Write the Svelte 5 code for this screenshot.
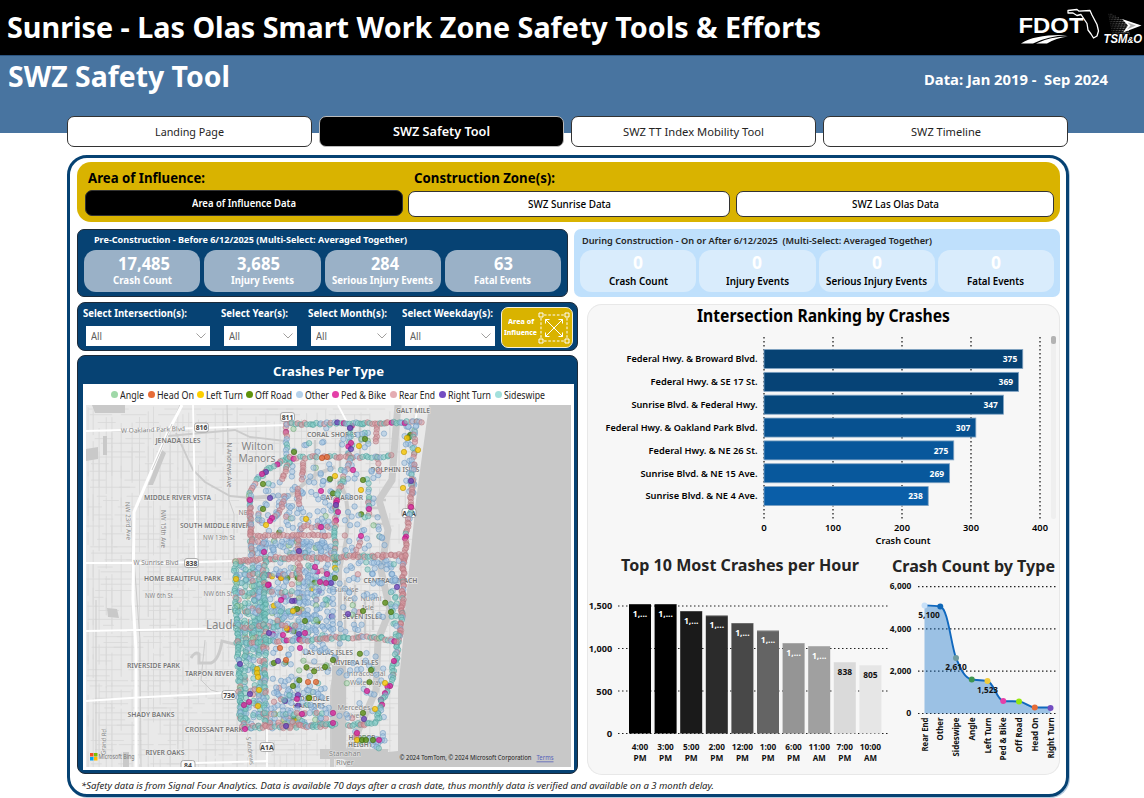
<script>
  // Gives a text run a fixed advance width, condensing or widening its glyphs.
  function fit(node, width) {
    const natural = node.getBoundingClientRect().width;
    if (!natural) return;
    node.style.width = width + 'px';
    node.style.transform = `scaleX(${width / natural})`;
  }

  const tabs = [
    { name: 'Landing Page', w: 69 },
    { name: 'SWZ Safety Tool', w: 97, active: true },
    { name: 'SWZ TT Index Mobility Tool', w: 141 },
    { name: 'SWZ Timeline', w: 70 }
  ];
  const before = [
    { v: '17,485', vw: 52, dx: 1.5, name: 'Crash Count', w: 59 },
    { v: '3,685', vw: 43, dx: -3.5, name: 'Injury Events', w: 63 },
    { v: '284', vw: 28, dx: 2, name: 'Serious Injury Events', w: 101 },
    { v: '63', vw: 19, dx: 1, name: 'Fatal Events', w: 57 }
  ];
  const during = before.map((m) => ({ ...m, v: '0', vw: 10, dx: 0 }));
  const filters = [
    { name: 'Select Intersection(s):', w: 104, cell: 138, box: 124 },
    { name: 'Select Year(s):', w: 67, cell: 87, box: 73 },
    { name: 'Select Month(s):', w: 79, cell: 94, box: 80 },
    { name: 'Select Weekday(s):', w: 91, cell: 99, box: 90 }
  ];
  const legend = [
    ['Angle', '#9fd8a8', 24, 37], ['Head On', '#e66c37', 37, 49], ['Left Turn', '#fdcf00', 37, 49],
    ['Off Road', '#5f930b', 37, 50], ['Other', '#b5d1ea', 24, 36], ['Ped & Bike', '#e43fa8', 45, 58],
    ['Rear End', '#e4adb3', 36, 49], ['Right Turn', '#744ec2', 43, 56], ['Sideswipe', '#a3e0dc', 41, 46]
  ];

  const ranking = [
    ['Federal Hwy. & Broward Blvd.', 375, '#064273', 131], ['Federal Hwy. & SE 17 St.', 369, '#064376', 107],
    ['Sunrise Blvd. & Federal Hwy.', 347, '#06487d', 126], ['Federal Hwy. & Oakland Park Blvd.', 307, '#075190', 152],
    ['Federal Hwy. & NE 26 St.', 275, '#08579b', 109], ['Sunrise Blvd. & NE 15 Ave.', 269, '#08589c', 117],
    ['Sunrise Blvd. & NE 4 Ave.', 238, '#0a5ea8', 112]
  ];
  const hours = [
    ['4:00', 'PM', 604, '#000', '1,...'], ['3:00', 'PM', 604, '#000', '1,...'], ['5:00', 'PM', 611, '#1a1a1a', '1,...'],
    ['2:00', 'PM', 615.5, '#2b2b2b', '1,...'], ['12:00', 'PM', 623, '#484848', '1,...'], ['1:00', 'PM', 630.5, '#646464', '1,...'],
    ['6:00', 'PM', 643, '#959595', '1,...'], ['11:00', 'AM', 646, '#a0a0a0', '1,...'], ['7:00', 'PM', 662, '#dadada', '838'],
    ['10:00', 'AM', 665, '#e6e6e6', '805']
  ];
  const types = [
    ['Rear End', 605.4, '#c7e0f8', 34], ['Other', 606.5, '#1068b8', 23], ['Sideswipe', 658, '#6f9ba0', 39],
    ['Angle', 679.5, '#3f9550', 23], ['Left Turn', 681, '#f0cb3c', 36], ['Ped & Bike', 701, '#e43fa8', 43],
    ['Off Road', 701.5, '#96e80c', 35], ['Head On', 707.5, '#e66c37', 34], ['Right Turn', 708, '#744ec2', 41]
  ];
  const tx = (i) => 924.5 + 15.75 * i;
  const curve = 'M924.5 605.4C930 605.6 936 605.8 940.2 606.5C948 608 951 645 956 658C960 667 964 678 971.7 679.5C977 680 982 680.2 987.5 681C994 683 997 700 1003.2 701C1008 701.3 1014 701.3 1019 701.5C1025 702 1029 707 1034.7 707.5H1050.5';

  // ---- crash map ----
  let seed = 71;
  const rnd = () => {
    seed = (seed * 1664525 + 1013904223) % 4294967296;
    return seed / 4294967296;
  };
  const kinds = {
    b: ['#a3c5e4', '#6a95bd'], p: ['#d6959c', '#b0747b'], t: ['#80cbc5', '#4f9c98'], g: ['#a0d6a8', '#6a9d70'],
    m: ['#d8259b', '#a01772'], v: ['#6a42b8', '#472a88'], d: ['#5b8f16', '#38610a'], y: ['#f7c500', '#b08c00'], o: ['#e66c37', '#ad4515']
  };
  const dots = [];
  const pick = (mix) => mix[Math.floor(rnd() * mix.length)];
  function road(points, step, mix, jitter = 1.1) {
    for (let i = 1; i < points.length; i++) {
      const [ax, ay] = points[i - 1];
      const [bx, by] = points[i];
      const n = Math.max(1, Math.round(Math.hypot(bx - ax, by - ay) / step));
      for (let k = 0; k < n; k++) {
        const t = (k + rnd() * 0.6) / n;
        dots.push([ax + (bx - ax) * t + (rnd() - 0.5) * 2 * jitter, ay + (by - ay) * t + (rnd() - 0.5) * 2 * jitter, pick(mix)]);
      }
    }
  }
  function area(x0, y0, x1, y1, n, mix) {
    for (let i = 0; i < n; i++) dots.push([x0 + rnd() * (x1 - x0), y0 + rnd() * (y1 - y0), pick(mix)]);
  }
  const calm = 'bbbbbbbbbbbbbbbbbgbtbbbbpbbgbbdbbbbb';
  const busy = 'bbbbbbbbtbbtbpbbbgtpbbbdbbbbbtyvmbbbb';
  const red = 'pppppppptppppppppptpppbppp';
  const mixed = 'ppptttpbtptbppttgppbtpttbpptppbtpmt';
  const teal = 'tttttbttpttbtgtttbtptttttbttpttgtttt';

  area(290, 428, 345, 452, 11, calm);
  area(355, 428, 385, 452, 8, calm);
  area(287, 462, 335, 490, 20, calm);
  area(256, 482, 290, 534, 36, calm);
  area(290, 490, 334, 534, 42, calm);
  area(340, 464, 385, 552, 44, calm);
  area(255, 539, 332, 555, 95, 'bbbbbbbbbbbbbbpbbgbtbbbbb');
  area(268, 562, 332, 640, 140, busy);
  area(300, 562, 332, 640, 36, calm);
  area(336, 560, 400, 634, 46, calm);
  area(372, 562, 400, 585, 22, calm);
  area(238, 562, 264, 640, 100, 'bbtbtbtbpbtgtbtbttbb');
  area(268, 570, 300, 636, 44, busy);
  area(239, 644, 263, 724, 74, 'bbtbtpbtgpbbbttbtpbb');
  area(268, 644, 300, 712, 38, calm);
  area(270, 690, 326, 724, 44, busy);
  area(300, 646, 332, 712, 24, calm);
  area(335, 642, 385, 720, 32, calm);
  area(268, 715, 332, 726, 34, 'btptbpbgb');
  area(404, 424, 415, 500, 28, calm);
  for (const x of [299, 308, 316, 333]) road([[x, 576], [x, 640]], 5.4, 'bbbbbbbg', 0.6);
  for (const x of [245, 253, 259]) road([[x, 562], [x + 1, 720]], 5.4, teal);
  for (const y of [575, 593, 612, 627]) road([[238, y], [300, y - 1]], 4.6, 'tpbpbtppbt');
  road([[318, 640], [339, 662]], 5, 'bbb');
  road([[351, 424], [350, 458]], 2.8, 'ttttbtpmvt', 2);
  road([[364, 426], [362, 440]], 4, 'ttgb', 2);
  road([[377, 426], [376, 444]], 3, 'ppp', 0.8);
  road([[377, 455], [378, 465]], 3, 'ppp', 0.8);
  road([[304, 462], [301, 480]], 2.6, 'ppp', 1);
  road([[289, 462], [281, 481]], 2.6, 'pptp', 1);
  road([[298, 488], [299, 506]], 2.6, 'ppp', 0.8);
  road([[285, 495], [281, 510], [271, 520]], 3, 'pppb', 0.8);
  road([[368, 480], [369, 520]], 4, 'tpptb', 1);
  road([[361, 536], [356, 552]], 4, 'pptb', 1.5);
  road([[300, 527], [335, 526]], 4, 'ppbp', 2);
  road([[298, 538], [299, 556]], 3, 'ppp');
  road([[299, 562], [300, 582]], 3, 'ppp');
  road([[334, 556], [336, 580]], 3.5, 'tdtyb');
  road([[253, 536], [335, 535]], 3, red);
  road([[286, 458], [270, 468], [256, 480], [250, 495], [250, 515], [252, 558]], 2.8, mixed);
  road([[250, 495], [250, 515], [252, 558]], 3.2, 'pppbpp');
  road([[287, 424], [286, 458]], 2.8, mixed);
  road([[286, 458], [320, 457], [377, 457], [394, 456]], 3, mixed);
  road([[287, 424], [340, 423.5], [424, 422]], 2.4, 'tpttpbtbpttpbtbpttpptvm');
  road([[350, 458], [342, 480], [336, 500], [335, 530], [334, 556]], 2.6, mixed);
  road([[415, 424], [413, 460], [412, 485]], 3, mixed, 1.6);
  road([[412, 480], [410, 515], [406, 535], [405, 556]], 2.3, 'ppppptmppbpppb');
  road([[404, 556], [403, 585], [402, 615], [399, 640]], 1.6, 'pppppppbppt');
  road([[393, 590], [396, 640]], 3.2, 'ttbtb', 3);
  road([[398, 640], [395, 662], [391, 684], [382, 700], [377, 722]], 1.9, 'ttpttbptbtttbm', 1.7);
  road([[268, 642], [310, 640], [330, 638], [352, 637], [380, 638], [398, 641]], 2.4, mixed, 1.4);
  road([[237, 643], [268, 642]], 2.4, teal);
  road([[235, 562], [265, 559]], 2.6, red);
  road([[265, 558], [335, 558], [345, 556], [406, 555.5]], 2.2, 'pppptppptpptpppt', 1.4);
  road([[235, 562], [236, 600], [238, 650], [240, 700], [243, 727]], 2.2, teal, 1.4);
  road([[265, 558], [264, 600], [265, 650], [265, 725]], 2, 'ttpttttpttb', 1.8);
  road([[265, 714], [333, 713]], 4, 'pppbbt', 1);
  road([[243, 727], [280, 727], [337, 725]], 2, 'tpptptppptbppt', 1.6);
  road([[348, 726], [358, 724], [376, 724]], 2.2, 'tpttpt', 1.6);
  road([[355, 730], [357, 740], [380, 740]], 3.4, 'pbgbtbb', 2);
  road([[383, 733], [384, 741], [374, 744], [381, 749]], 2.6, 'bbbtb', 1.4);
  const accents = [
    [263, 509, 'd'], [250, 500, 'm'], [270, 498, 'v'], [272, 518, 'm'], [270, 521, 'm'], [266, 525, 'y'], [306, 519, 'y'],
    [335, 476, 'y'], [353, 470, 'm'], [361, 490, 'y'], [294, 452, 'd'], [351, 449, 'v'], [351, 443, 'm'], [350, 428, 'v'],
    [321, 491, 'm'], [321, 527, 'm'], [299, 551, 'v'], [330, 479, 'd'], [263, 484, 'd'], [266, 472, 'v'], [262, 474, 'm'],
    [404, 452, 'y'], [418, 450, 'y'], [407, 438, 'y'], [359, 446, 'y'], [365, 439, 'd'], [363, 480, 'd'], [358, 557, 'p'],
    [336, 505, 'v'], [338, 512, 'm'], [369, 509, 'm'], [361, 536, 'm'], [403, 488, 'y'], [411, 481, 'v'], [411, 507, 'm'],
    [397, 587, 'v'], [320, 582, 'm'], [331, 583, 'v'], [326, 583, 'm'], [315, 567, 'm'], [327, 574, 'm'], [236, 579, 'y'],
    [264, 552, 'm'], [348, 614, 'v'], [363, 611, 'd'], [281, 600, 'm'], [292, 601, 'v'], [297, 609, 'd'], [293, 611, 'y'],
    [305, 621, 'd'], [268, 585, 'm'], [269, 633, 'v'], [283, 635, 'm'], [299, 634, 'v'], [305, 633, 'm'], [300, 648, 'm'],
    [278, 661, 'v'], [286, 660, 'o'], [280, 648, 'o'], [325, 667, 'd'], [333, 660, 'd'], [308, 682, 'o'], [316, 682, 'o'],
    [257, 669, 'y'], [257, 673, 'y'], [258, 677, 'y'], [259, 690, 'y'], [258, 706, 'y'], [298, 695, 'v'], [297, 699, 'm'],
    [293, 686, 'd'], [309, 698, 'd'], [302, 714, 'm'], [367, 691, 'm'], [385, 683, 'y'], [375, 709, 'y'], [363, 713, 'd'],
    [364, 719, 'v'], [333, 713, 'm'], [333, 723, 'm'], [286, 726, 'v'], [357, 740, 'y'], [362, 740, 'd'], [366, 740, 'd'],
    [373, 740, 'd'], [379, 740, 'm'], [357, 733, 'm'], [371, 670, 'd'], [394, 661, 'm'], [327, 457, 'o'], [322, 458, 'o'],
    [240, 664, 'v'], [250, 694, 'v'], [249, 702, 'm'], [244, 705, 'm'], [245, 729, 'm'], [391, 612, 'd']
  ];
  dots.push(...accents);

  // Local streets of the base map
  let streets = '';
  for (let x = 88; x < 420; x += 5 + rnd() * 6) {
    for (let y = 405 + rnd() * 25; y < 767; y += 12 + rnd() * 34) {
      const len = 12 + rnd() * 46;
      if (x + (y - 405) * 0.1 < 425) streets += `M${x.toFixed(1)} ${y.toFixed(1)}v${len.toFixed(1)}`;
    }
  }
  for (let y = 409; y < 767; y += 4 + rnd() * 5) {
    for (let x = 86 + rnd() * 20; x < 385; x += 16 + rnd() * 40) {
      streets += `M${x.toFixed(1)} ${y.toFixed(1)}h${(8 + rnd() * 34).toFixed(1)}`;
    }
  }

  const places = [
    ['GALT MILE', 413, 413, 34, 7], ['JENADA ISLES', 178, 442.5, 45, 7], ['MIDDLE RIVER VISTA', 177.5, 500, 67, 7],
    ['SOUTH MIDDLE RIVER', 215, 528, 70, 7], ['HOME BEAUTIFUL PARK', 182.5, 581, 77, 7], ['RIVERSIDE PARK', 153.5, 668, 53, 7],
    ['TARPON RIVER', 209.5, 676, 49, 7], ['SHADY BANKS', 151, 717, 47, 7], ['CROISSANT PARK', 214, 732, 58, 7],
    ['RIVER OAKS', 165, 755, 39, 7], ['CORAL SHORES', 332, 437, 50, 7], ['DOLPHIN ISLES', 395, 472, 49, 7],
    ['BAY HARBOR', 342, 500, 42, 7], ['CENTRAL BEACH', 390.5, 582.5, 54, 7], ['SEVEN ISLES', 362.5, 619, 40, 7],
    ['LAS OLAS ISLES', 328, 655, 50, 7], ['RIVIERA ISLES', 356, 665, 45, 7], ['LAUDERDALE', 308, 701, 43, 7],
    ['HARBORS', 309, 708, 32, 7], ['HARBOR', 362, 740, 27, 7], ['HEIGHTS', 362, 747, 28, 7]
  ];
  const soft = [
    ['Wilton', 257.5, 450, 32, 10.5], ['Manors', 257, 462, 37, 10.5], ['Fort', 236, 614, 18, 12], ['Lauderdale', 236, 629, 60, 12],
    ['Sunrise', 346, 592, 25, 7.5], ['Key', 349, 601, 11, 7.5], ['Nurmi', 371, 601, 21, 7.5], ['Isle', 368, 610, 12, 7.5],
    ['Cordova', 318, 671, 27, 7.5], ['Intracoastal', 366, 676, 39, 7.5], ['Waterway', 366, 685, 32, 7.5],
    ['Mercedes', 354, 710, 33, 7.5], ['River', 354, 718, 16, 7.5], ['Stanahan', 345, 756, 32, 7.5], ['River', 345, 764.5, 18, 7.5]
  ];
  const lanes = [
    ['W Oakland Park Blvd', 153, 432, 64, -2], ['W Sunrise Blvd', 156, 565, 45, 0], ['NW 13th St', 219, 540, 32, 0],
    ['NW 6th St', 159, 597.5, 28, 0], ['NW 6th St', 218, 596, 29, 0], ['N Andrews Ave', 227, 465, 45, 90],
    ['NW 23rd Ave', 126, 521, 38, 88], ['NW 15th Ave', 161, 529, 38, 90], ['NE', 243, 515, 9, 0],
    ['S Andrews', 248, 751, 28, 82], ['Grand Rd', 106, 742, 26, -88]
  ];
  const shields = [['811', 287.5, 417], ['816', 201.5, 427.5], ['838', 191.5, 563], ['736', 229, 695], ['A1A', 267, 747], ['84', 188, 765], ['A1A', 409, 513]];
</script>

{#snippet tiles(list, cls)}
  <div class="tiles {cls}">
    {#each list as m}
      <div class="tile">
        <b class="num" style:margin-left="{m.dx * 2}px"><span class="fit" use:fit={m.vw}>{m.v}</span></b>
        <span class="fit cap" use:fit={m.w}>{m.name}</span>
      </div>
    {/each}
  </div>
{/snippet}

{#snippet txt(s, x, y, w, size, anchor, color)}
  <text {x} {y} font-size={size} text-anchor={anchor} fill={color} textLength={w} lengthAdjust="spacingAndGlyphs">{s}</text>
{/snippet}

<div class="page">
  <header>
    <h1><span class="fit" use:fit={814}>Sunrise - Las Olas Smart Work Zone Safety Tools &amp; Efforts</span></h1>
    <svg class="logo" viewBox="1016 4 128 44" width="128" height="44">
      <text x="1018.500" y="32.500" font-size="22" font-weight="700" fill="#fff" textLength="65" lengthAdjust="spacingAndGlyphs" font-family="Liberation Sans">FDOT</text>
      <path d="M1021 43.500Q1035 34 1067 35Q1048 36 1033 43.500ZM1036 43.500Q1050 36.500 1068 36.500Q1056 38 1047 43.500Z" fill="#fff" />
      <path d="M1068 10.500L1077 9.500L1079 11.200L1090 10.500L1092 15L1097 24.500L1098.500 31L1097 36L1093.500 38L1091 34L1088 30L1087 23.500L1084 19L1081 14.500L1077 15.500L1073 13L1068 13Z" fill="none" stroke="#fff" stroke-width="1.300" stroke-linejoin="round" />
      <g fill="#aaa">
        {#each Array(12) as _, c}
          {#each Array(13) as _, r}
            {#if r * 1.8 > c * 0.85 && r * 1.8 < 23 - c * 0.1}
              <rect x={1108 + c * 1.5 + r * 0.35} y={12 + r * 1.8} width=".9" height=".9" opacity={0.3 + c / 16} />
            {/if}
          {/each}
        {/each}
      </g>
      <path d="M1122 19L1141.500 25.500L1123 32.500L1128 25.500Z" fill="#fff" />
      <path d="M1127.500 22.500L1136 25.500L1127 29.500L1130.500 25.500Z" fill="#000" opacity=".3" />
      <text x="1103.500" y="42.500" font-size="12" font-weight="700" font-style="italic" fill="#fff" stroke="#000" stroke-width="1.500" paint-order="stroke" textLength="38.500" lengthAdjust="spacingAndGlyphs" font-family="Liberation Sans">TSM<tspan font-size="8.500">&amp;</tspan>O</text>
    </svg>
  </header>

  <div class="band">
    <h2><span class="fit" use:fit={222}>SWZ Safety Tool</span></h2>
    <div class="dates"><span class="fit" use:fit={184}>Data: Jan 2019 -&nbsp; Sep 2024</span></div>
  </div>

  <nav>
    {#each tabs as t}
      <button class:active={t.active}><span class="fit" use:fit={t.w}>{t.name}</span></button>
    {/each}
  </nav>

  <main>
    <section class="zones">
      <div class="zone-heads">
        <b class="fit" use:fit={117}>Area of Influence:</b>
        <b class="fit" use:fit={141}>Construction Zone(s):</b>
      </div>
      <div class="zone-buttons">
        <button class="active"><span class="fit" use:fit={104}>Area of Influence Data</span></button>
        <button><span class="fit" use:fit={83}>SWZ Sunrise Data</span></button>
        <button><span class="fit" use:fit={87}>SWZ Las Olas Data</span></button>
      </div>
    </section>

    <div class="metrics">
      <section class="pre">
        <div class="head"><span class="fit" use:fit={313}>Pre-Construction - Before 6/12/2025 (Multi-Select: Averaged Together)</span></div>
        {@render tiles(before, 'solid')}
      </section>
      <section class="post">
        <div class="head"><span class="fit" use:fit={350}>During Construction - On or After 6/12/2025&nbsp; (Multi-Select: Averaged Together)</span></div>
        {@render tiles(during, 'pale')}
      </section>
    </div>

    <div class="body">
      <div class="left">
        <section class="filters">
          {#each filters as f}
            <div class="filter" style:width="{f.cell}px">
              <div class="label"><b class="fit" use:fit={f.w}>{f.name}</b></div>
              <div class="select" style:width="{f.box}px">
                <span class="fit" use:fit={11}>All</span>
                <svg width="10" height="6" viewBox="0 0 10 6"><path d="M.5 .5L5 5L9.500 .5" fill="none" stroke="#a19f9d" /></svg>
              </div>
            </div>
          {/each}
          <button class="influence">
            <span><i class="fit" use:fit={26}>Area of</i><i class="fit" use:fit={33}>Influence</i></span>
            <svg width="32" height="32" viewBox="0 0 32 32" fill="none" stroke="#fff">
              <path d="M6 3H26M6 29H26M3 6V26M29 6V26" stroke-dasharray="2.600 1.700" />
              <path d="M1 1H5V5H1ZM27 1H31V5H27ZM1 27H5V31H1ZM27 27H31V31H27Z" />
              <path d="M7.500 7.500L24.500 24.500M24.500 7.500L7.500 24.500M7.500 11.500V7.500H11.500M20.500 7.500H24.500V11.500M24.500 20.500V24.500H20.500M11.500 24.500H7.500V20.500" />
            </svg>
          </button>
        </section>

        <section class="mapcard">
          <h3><span class="fit" use:fit={111}>Crashes Per Type</span></h3>
          <div class="sheet">
            <div class="legend">
              {#each legend as [name, color, w, cell]}
                <div style:width="{cell}px"><i style:background={color}></i><span class="fit" use:fit={w}>{name}</span></div>
              {/each}
            </div>
            <svg class="map" viewBox="86 405 485 362" width="485" height="362">
              <rect x="86" y="405" width="485" height="362" fill="#e9e9e9" />
              <path d={streets} stroke="#d8d8d8" stroke-width=".8" fill="none" />
              <path d="M92 405h33v8h-30ZM103 436h4v19h-4ZM86 449l12-2v12l-12 2ZM107 608l10 1 2 9-11-1ZM123 752h6v15h-6ZM162 450l4 3-13 32-5 0Z" fill="#c9c9c9" />
              <g fill="none" stroke="#cbcbcb">
                <path d="M176 433L193 470L205 482L230 496L250 498M168 436L235 430L250 437L285 441" stroke-width="1.800" />
                <path d="M180 405L152 470M131 520L140 640L141 767M205 640l-4 40 10 10 22 6M227 405l2 95 5 14v48M96 600v160" stroke-width="1" />
                <path d="M191 658q4-7 8-4v9h12q8-3 11-22l20 5" stroke-width="3" />
                <path d="M250 498l40-3 25-20 20-8M338 480q14 20 8 60l-6 30v70l-8 50v77" stroke-width="4" />
                <path d="M398 405L395 440L392 480L379 500L388 530L381 570L390 610L378 640L376 690L362 722L345 760" stroke-width="7" />
                <path d="M345 580v60M355 585v50M365 590v45M373 595v35M372 500h14M370 508h15M371 516h14M373 524h12M300 660q15 6 32 4M315 440v40M340 440v30M360 420v40" stroke-width="2.400" />
              </g>
              <path d="M429 405L416 500L406 600L403 640L398 690L398 751L388 752L380 767H571V405Z" fill="#c8c8c8" />
              <path d="M320 749h68v18h-42v-8h-26ZM332 665h14v85h-14Z" fill="#c8c8c8" />
              <g fill="none" stroke="#fff">
                <path d="M86 431L200 428L287 425M193 405L196 560M86 563H160L235 561M86 631L140 630L240 628M86 701L130 698L240 692M195 763L268 761M267 725V767M338 405L348 424M418 405L412 440" stroke-width="1.800" />
                <path d="M182 405L168 432L134 512L133 600L136 650V767" stroke-width="3" />
                <path d="M172 424L160 452L152 470" stroke="#cfcfcf" stroke-width="1" />
              </g>
              <g font-weight="600" fill="#777" text-anchor="middle" stroke="#f2f2f2" stroke-width="1.400" stroke-opacity=".7" paint-order="stroke">
                {#each places as [s, x, y, w, size]}
                  <text {x} {y} font-size={size} textLength={w} lengthAdjust="spacingAndGlyphs">{s}</text>
                {/each}
              </g>
              <g fill="#848484" text-anchor="middle" stroke="#f2f2f2" stroke-width="1.200" stroke-opacity=".6" paint-order="stroke">
                {#each soft as [s, x, y, w, size]}
                  <text {x} {y} font-size={size} textLength={w} lengthAdjust="spacingAndGlyphs">{s}</text>
                {/each}
                {#each lanes as [s, x, y, w, a]}
                  <text {x} {y} font-size="6.500" transform="rotate({a} {x} {y})" textLength={w} lengthAdjust="spacingAndGlyphs">{s}</text>
                {/each}
              </g>
              {#each shields as [s, x, y]}
                <rect x={x - 7} y={y - 4.5} width="14" height="9" rx="2.500" fill="#fafafa" stroke="#999" stroke-width=".8" />
                <text {x} y={y + 2.5} font-size="6.800" font-weight="700" text-anchor="middle" fill="#444">{s}</text>
              {/each}
              {#each dots as [x, y, k]}
                <circle cx={x.toFixed(1)} cy={y.toFixed(1)} r="2.700" fill={kinds[k][0]} fill-opacity={'mvdyo'.includes(k) ? 0.8 : 0.55} stroke={kinds[k][1]} stroke-opacity=".58" stroke-width=".9" />
              {/each}
              <path d="M90 753h3.500v3.500h-3.500Z" fill="#f25022" />
              <path d="M94 753h3.500v3.500h-3.500Z" fill="#7fba00" />
              <path d="M90 757h3.500v3.500h-3.500Z" fill="#00a4ef" />
              <path d="M94 757h3.500v3.500h-3.500Z" fill="#ffb900" />
              {@render txt('Microsoft Bing', 98.5, 759, 36, 6.5, 'start', '#777')}
              {@render txt('© 2024 TomTom, © 2024 Microsoft Corporation', 399.5, 760.3, 132, 6.3, 'start', '#222')}
              {@render txt('Terms', 536.5, 760.3, 17, 6.3, 'start', '#5560b8')}
              <path d="M536.500 761.800h17" stroke="#5560b8" stroke-width=".8" />
            </svg>
          </div>
        </section>
      </div>

      <section class="charts">
        <svg viewBox="587 304 473 242" width="473" height="242" font-weight="600">
          <g font-weight="700">{@render txt('Intersection Ranking by Crashes', 823.5, 322, 253, 17, 'middle', '#000')}</g>
          {#each [0, 1, 2, 3, 4] as i}
            <path d="M{764 + 69 * i} 337V520" stroke="#222" stroke-width="1.300" stroke-dasharray="1.500 2.500" />
            {@render txt(String(i * 100), 764 + 69 * i, 531, i ? 16 : 5.5, 9.5, 'middle', '#000')}
          {/each}
          <g font-weight="700">
            {#each ranking as [name, v, color, w], i}
              <rect x="764" y={349.5 + 22.85 * i} width={v * 0.69} height="19" fill={color} stroke="#7fa3c4" stroke-width=".8" />
              <g font-weight="600">{@render txt(name, 757.5, 362.3 + 22.85 * i, w, 9.5, 'end', '#000')}</g>
              {@render txt(String(v), 758.5 + v * 0.69, 362.3 + 22.85 * i, 14.5, 8, 'end', '#fff')}
            {/each}
          </g>
          {@render txt('Crash Count', 903, 544, 55, 9.5, 'middle', '#000')}
          <rect x="1051" y="336" width="5" height="183" rx="2.500" fill="#efefef" />
          <rect x="1051" y="336" width="5" height="8" rx="2" fill="#b3b3b3" />
        </svg>
        <div class="pair">
          <svg viewBox="587 546 302 229" width="302" height="229" font-weight="700">
            {@render txt('Top 10 Most Crashes per Hour', 740, 571.3, 238, 16.5, 'middle', '#252423')}
            {#each ['0', '500', '1,000', '1,500'] as n, i}
              <path d="M618 {733.5 - 42.5 * i}H889" stroke="#222" stroke-width="1.200" stroke-dasharray="1.500 2.500" />
              {@render txt(n, 612.3, 737.2 - 42.6 * i, [5.5, 16, 23.5, 23.5][i], 9.5, 'end', '#111')}
            {/each}
            {#each hours as [h, ap, top, color, v], i}
              <rect x={629 + 25.6 * i} y={top} width="22" height={733.5 - top} fill={color} />
              <path d="M{629 + 25.6 * i} {top + 0.5}h22" stroke="#fff" opacity=".2" />
              {@render txt(v, 640 + 25.6 * i, top + 12.5, 14.5, 8, 'middle', i > 7 ? '#111' : '#fff')}
              {@render txt(h, 640 + 25.6 * i, 749.7, h.length > 4 ? 21.5 : 16.5, 8, 'middle', '#111')}
              {@render txt(ap, 640 + 25.6 * i, 761, 13, 8, 'middle', '#111')}
            {/each}
          </svg>
          <svg viewBox="889 546 171 229" width="171" height="229" font-weight="700">
            {@render txt('Crash Count by Type', 973.5, 572, 163, 16.5, 'middle', '#252423')}
            {#each ['0', '2,000', '4,000', '6,000'] as n, i}
              <path d="M918 {713.5 - 42.3 * i}H1056" stroke="#222" stroke-width="1.200" stroke-dasharray="1.500 2.500" />
              {@render txt(n, 911.3, 716.3 - 42.3 * i, i ? 21.5 : 5, 8, 'end', '#111')}
            {/each}
            <path d="{curve}V713.500H924.500Z" fill="#1170c9" opacity=".4" />
            <path d={curve} fill="none" stroke="#1068be" stroke-width="1.900" />
            {#each types as [name, y, color, w], i}
              <circle cx={tx(i)} cy={y} r="3" fill={color} />
              <text x={tx(i) + 3} y="717.500" transform="rotate(-90 {tx(i) + 3} 717.500)" font-size="8" text-anchor="end" fill="#111" textLength={w} lengthAdjust="spacingAndGlyphs">{name}</text>
            {/each}
            {@render txt('5,100', 929, 618, 21.5, 8, 'middle', '#111')}
            {@render txt('2,610', 956, 670.3, 21.5, 8, 'middle', '#111')}
            {@render txt('1,523', 987.5, 693, 21, 8, 'middle', '#111')}
          </svg>
        </div>
      </section>
    </div>

    <footer><span class="fit" use:fit={633}>*Safety data is from Signal Four Analytics. Data is available 70 days after a crash date, thus monthly data is verified and available on a 3 month delay.</span></footer>
  </main>
</div>

<style>
  :global(body) { margin: 0; background: #fff; overflow: hidden; }
  .page, .page :global(button) { font-family: 'Noto Sans', 'Open Sans', sans-serif; }
  .page { width: 1144px; height: 798px; overflow: hidden; box-sizing: border-box; }
  .page :global(*) { box-sizing: border-box; }
  .fit { display: inline-block; white-space: nowrap; transform-origin: 0 50%; text-align: left; }
  svg { display: block; }
  button { padding: 0; margin: 0; display: flex; align-items: center; justify-content: center; }
  h1, h2, h3 { margin: 0; font-weight: 700; }

  header { height: 55px; background: #000; color: #fff; display: flex; justify-content: space-between; padding: 4px 0 0 7px; }
  h1 { font-size: 28.5px; line-height: 47px; }
  .band { height: 78px; background: #4874a0; border-top: 1px solid #2b5480; color: #fff; display: flex; justify-content: space-between; padding: 0 36px 0 8px; }
  h2 { font-size: 28px; line-height: 41px; }
  .dates { font-size: 15px; font-weight: 700; line-height: 47px; }

  nav { display: flex; gap: 7px; margin: -17px 0 0 67px; position: relative; }
  nav button { width: 245px; height: 31px; border: 1.5px solid #333; border-radius: 7px; background: #fff; font-size: 11.5px; color: #252423; }
  nav button.active { background: #000; color: #fff; border-color: #bbb; font-weight: 600; font-size: 12.5px; }

  main { margin: 8px 0 0 67px; width: 1002px; height: 642px; border: 3px solid #064273; border-radius: 20px; padding: 4px 6px 0 7px; box-shadow: 1px 1px 0 #b5cbdf; }
  .zones { height: 60px; background: #d9b300; border-radius: 14px; padding: 6px 6px 0 8px; }
  .zone-heads { display: flex; font-size: 13.5px; line-height: 20px; height: 22px; padding-left: 2.5px; gap: 209.5px; }
  .zone-buttons { display: flex; align-items: center; }
  .zone-buttons button { flex: none; width: 322px; height: 26px; margin-top: 1px; background: #fff; border: 1px solid #333; border-radius: 7px; font-size: 10.3px; font-weight: 500; color: #000; }
  .zone-buttons button.active { width: 318px; margin: -1px 5px 0 0; background: #000; color: #fff; font-weight: 600; }
  .zone-buttons button:last-child { width: 318px; margin-left: 6px; }

  .metrics { display: flex; gap: 6px; margin-top: 7px; height: 68px; }
  .pre { width: 491px; background: #064273; border: 1px solid #1d2b3a; border-radius: 7px; padding: 0 6px; color: #fff; }
  .post { width: 486px; background: #bfe0fc; border-radius: 7px; padding: 1px 6px 0; color: #252423; }
  .head { font-size: 9.3px; line-height: 20px; height: 20px; font-weight: 700; padding-left: 10px; }
  .post .head { font-weight: 600; padding-left: 2px; padding-top: 1px; }
  .tiles { display: flex; gap: 4px; }
  .pale { gap: 3px; }
  .tile { flex: 1; height: 42px; border-radius: 12px; background: #9ab1c7; display: flex; flex-direction: column; align-items: center; padding-top: 4px; }
  .pale .tile { background: #d9ecfc; padding-top: 3px; }
  .num { font-size: 17px; line-height: 20px; height: 20px; color: #fff; }
  .cap { font-size: 9.8px; line-height: 14px; font-weight: 700; }
  .pale .cap { color: #000; margin-top: 2px; font-weight: 600; }

  .body { display: flex; gap: 9px; margin-top: 5px; }
  .left { width: 501px; }
  .filters { height: 49px; background: #064273; border: 1px solid #1d2b3a; border-radius: 8px; display: flex; padding: 4px 0 0 5px; color: #fff; }
  .filter { font-size: 9.8px; line-height: 14px; flex: none; }
  .label { height: 14px; }
  .select { height: 20px; margin: 5px 0 0 3px; background: #fff; color: #605e5c; display: flex; align-items: center; justify-content: space-between; padding: 0 4px 0 5px; font-size: 10px; }
  .influence { width: 72px; height: 41px; background: #d9b300; border: 1px solid #f5f0dc; border-radius: 7px; color: #fff; gap: 1px; }
  .influence span { display: flex; flex-direction: column; align-items: center; }
  .influence i { font: 800 7px/10.5px 'Noto Sans', sans-serif; }

  .mapcard { height: 419px; margin-top: 4px; background: #064273; border: 1px solid #1d2b3a; border-radius: 8px; padding: 0 3px 0 5px; }
  h3 { height: 28px; line-height: 32px; font-size: 12.5px; color: #fff; text-align: center; }
  .sheet { height: 386px; background: #fff; padding: 0 3px; }
  .legend { height: 21px; display: flex; align-items: center; padding-left: 25px; font-size: 10px; color: #252423; line-height: 20px; }
  .legend div { flex: none; display: flex; align-items: center; gap: 2px; }
  .legend i { width: 7px; height: 7px; border-radius: 50%; flex: none; }
  .charts { width: 473px; height: 471px; margin-top: 2px; background: #f7f7f7; border-radius: 15px; box-shadow: inset 0 0 0 1px #e8e8e8; }
  .pair { display: flex; }
  .pair svg { overflow: visible; }
  footer { font-size: 9.6px; font-style: italic; line-height: 16px; padding: 3px 0 0 4px; color: #252423; }
</style>
